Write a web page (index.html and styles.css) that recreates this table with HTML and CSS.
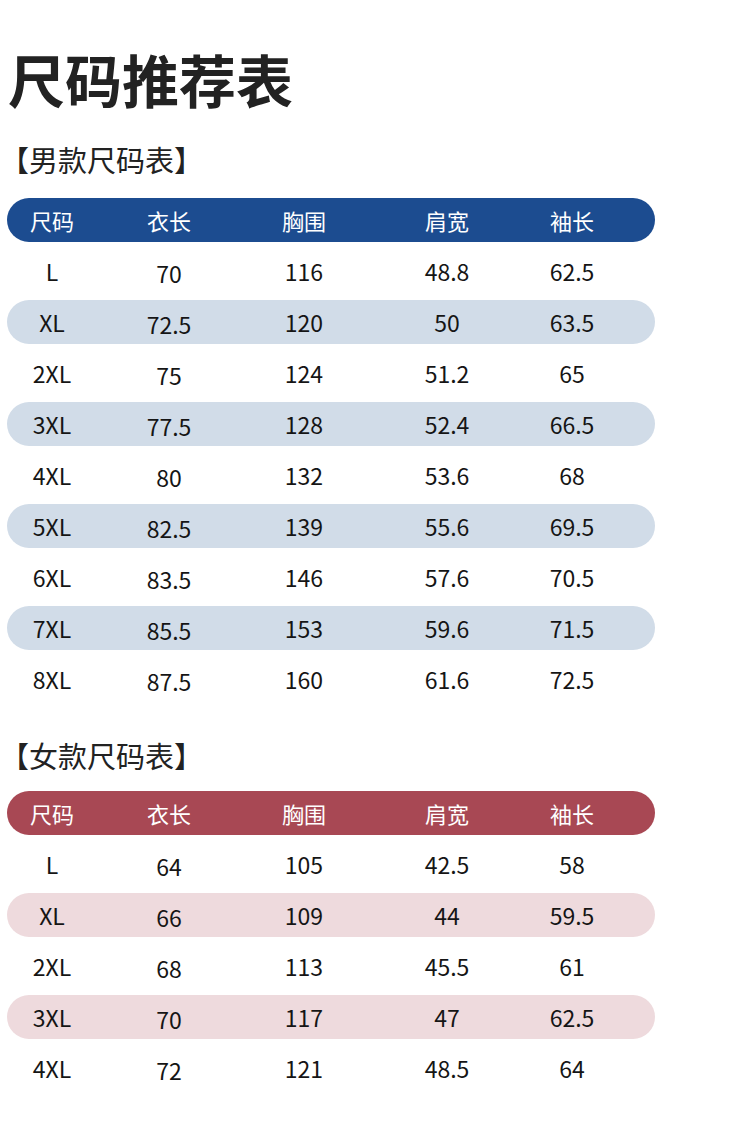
FILE: index.html
```html
<!DOCTYPE html>
<html lang="zh-CN">
<head>
<meta charset="utf-8">
<title>尺码推荐表</title>
<link rel="stylesheet" href="styles.css">
</head>
<body>
<main class="page">
  <h1 class="title">尺码推荐表</h1>

  <section class="section men">
    <h2 class="subtitle">【男款尺码表】</h2>
    <div class="table">
      <div class="row head"><span>尺码</span><span>衣长</span><span>胸围</span><span>肩宽</span><span>袖长</span></div>
      <div class="row"><span>L</span><span class="c2">70</span><span>116</span><span>48.8</span><span>62.5</span></div>
      <div class="row stripe"><span>XL</span><span class="c2">72.5</span><span>120</span><span>50</span><span>63.5</span></div>
      <div class="row"><span>2XL</span><span class="c2">75</span><span>124</span><span>51.2</span><span>65</span></div>
      <div class="row stripe"><span>3XL</span><span class="c2">77.5</span><span>128</span><span>52.4</span><span>66.5</span></div>
      <div class="row"><span>4XL</span><span class="c2">80</span><span>132</span><span>53.6</span><span>68</span></div>
      <div class="row stripe"><span>5XL</span><span class="c2">82.5</span><span>139</span><span>55.6</span><span>69.5</span></div>
      <div class="row"><span>6XL</span><span class="c2">83.5</span><span>146</span><span>57.6</span><span>70.5</span></div>
      <div class="row stripe"><span>7XL</span><span class="c2">85.5</span><span>153</span><span>59.6</span><span>71.5</span></div>
      <div class="row"><span>8XL</span><span class="c2">87.5</span><span>160</span><span>61.6</span><span>72.5</span></div>
    </div>
  </section>

  <section class="section women">
    <h2 class="subtitle">【女款尺码表】</h2>
    <div class="table">
      <div class="row head"><span>尺码</span><span>衣长</span><span>胸围</span><span>肩宽</span><span>袖长</span></div>
      <div class="row"><span>L</span><span class="c2">64</span><span>105</span><span>42.5</span><span>58</span></div>
      <div class="row stripe"><span>XL</span><span class="c2">66</span><span>109</span><span>44</span><span>59.5</span></div>
      <div class="row"><span>2XL</span><span class="c2">68</span><span>113</span><span>45.5</span><span>61</span></div>
      <div class="row stripe"><span>3XL</span><span class="c2">70</span><span>117</span><span>47</span><span>62.5</span></div>
      <div class="row"><span>4XL</span><span class="c2">72</span><span>121</span><span>48.5</span><span>64</span></div>
    </div>
  </section>
</main>
</body>
</html>
```

FILE: styles.css
```css
html, body {
  margin: 0;
  padding: 0;
  background: #ffffff;
}

body {
  font-family: "Noto Sans CJK SC", "Noto Sans", sans-serif;
  color: #1a1a1a;
}

.page {
  width: 750px;
  padding-top: 47px;
}

.title {
  margin: 0 0 0 8px;
  font-size: 57px;
  line-height: 62px;
  font-weight: 700;
  color: #222222;
  letter-spacing: 0;
}

.subtitle {
  margin: 0;
  font-size: 29px;
  line-height: 36px;
  font-weight: 400;
  color: #222222;
}

.men {
  margin-top: 32px;
}

.women {
  margin-top: 36px;
}

.section .table {
  margin-top: 21px;
}

.women .table {
  margin-top: 18px;
}

.table {
  display: flex;
  flex-direction: column;
  gap: 7px;
  width: 648px;
  margin-left: 7px;
}

.row {
  display: grid;
  grid-template-columns: 90px 144px 126px 160px 90px 1fr;
  height: 44px;
  align-items: center;
  border-radius: 22px;
  font-size: 23px;
  line-height: 42px;
  color: #151515;
}

.row span {
  text-align: center;
  white-space: nowrap;
}

.row .c2 {
  padding-top: 4px;
  line-height: 38px;
}

.head {
  font-size: 22px;
  color: #ffffff;
}

.head .c2 {
  padding-top: 0;
  line-height: 42px;
}

.men .head {
  background: #1c4c90;
}

.men .stripe {
  background: #d1dce8;
}

.women .head {
  background: #a84854;
}

.women .stripe {
  background: #eedadd;
}
```
